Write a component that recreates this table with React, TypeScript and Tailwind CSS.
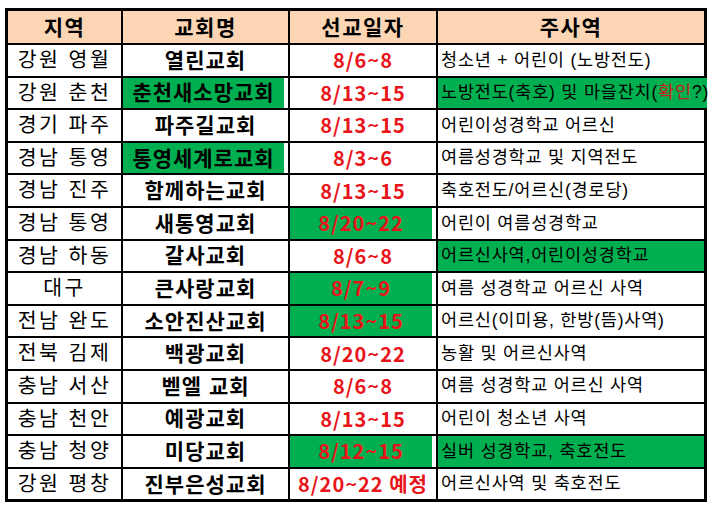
import React from 'react'

type Row = {
  region: string
  church: string
  date: string
  work: React.ReactNode
  churchGreen?: boolean
  dateGreen?: boolean
  workGreen?: boolean
  workOverflow?: boolean
}

const ROWS: Row[] = [
  { region: '강원 영월', church: '열린교회', date: '8/6~8', work: '청소년 + 어린이 (노방전도)' },
  {
    region: '강원 춘천',
    church: '춘천새소망교회',
    date: '8/13~15',
    work: (
      <>
        노방전도(축호) 및 마을잔치(<span className="text-[#c0221a]">확인</span>?)
      </>
    ),
    churchGreen: true,
    workGreen: true,
    workOverflow: true,
  },
  { region: '경기 파주', church: '파주길교회', date: '8/13~15', work: '어린이성경학교 어르신' },
  { region: '경남 통영', church: '통영세계로교회', date: '8/3~6', work: '여름성경학교 및 지역전도', churchGreen: true },
  { region: '경남 진주', church: '함께하는교회', date: '8/13~15', work: '축호전도/어르신(경로당)' },
  { region: '경남 통영', church: '새통영교회', date: '8/20~22', work: '어린이 여름성경학교', dateGreen: true },
  { region: '경남 하동', church: '갈사교회', date: '8/6~8', work: '어르신사역,어린이성경학교', workGreen: true },
  { region: '대구', church: '큰사랑교회', date: '8/7~9', work: '여름 성경학교 어르신 사역', dateGreen: true },
  { region: '전남 완도', church: '소안진산교회', date: '8/13~15', work: '어르신(이미용, 한방(뜸)사역)', dateGreen: true },
  { region: '전북 김제', church: '백광교회', date: '8/20~22', work: '농활 및 어르신사역' },
  { region: '충남 서산', church: '벧엘 교회', date: '8/6~8', work: '여름 성경학교 어르신 사역' },
  { region: '충남 천안', church: '예광교회', date: '8/13~15', work: '어린이 청소년 사역' },
  { region: '충남 청양', church: '미당교회', date: '8/12~15', work: '실버 성경학교, 축호전도', dateGreen: true, workGreen: true },
  { region: '강원 평창', church: '진부은성교회', date: '8/20~22 예정', work: '어르신사역 및 축호전도' },
]

// Latin glyphs (spaces, brackets) from Liberation Sans, hangul from Noto CJK
const MIXED = "font-['Liberation_Sans','Noto_Sans_CJK_KR',sans-serif]"
const CJK = "font-['Noto_Sans_CJK_KR',sans-serif]"

function HeaderCell({ children }: { children: React.ReactNode }) {
  return (
    <div className="flex items-center justify-center bg-[#fcd5b4] text-[21px] font-bold leading-none tracking-[1.5px] text-black">
      {children}
    </div>
  )
}

export default function App() {
  return (
    <div className={`min-h-[506px] bg-white pl-[5px] pt-[8px] ${MIXED}`}>
      <div className="grid w-[702px] grid-cols-[113px_165px_146px_266px] grid-rows-[32px] auto-rows-[30.6px] gap-[2px] border-[3px] border-black bg-black">
        <HeaderCell>지역</HeaderCell>
        <HeaderCell>교회명</HeaderCell>
        <HeaderCell>선교일자</HeaderCell>
        <HeaderCell>주사역</HeaderCell>
        {ROWS.map((r, i) => (
          <React.Fragment key={i}>
            <div className="flex items-center justify-center bg-white text-[20.5px] leading-none tracking-[2.5px] text-black">
              {r.region}
            </div>
            <div className="flex bg-white">
              <div
                className={`flex flex-1 items-center justify-center text-[21px] font-bold leading-none tracking-[1px] text-black ${
                  r.churchGreen ? 'mr-[4px] bg-[#00b050]' : ''
                }`}
              >
                {r.church}
              </div>
            </div>
            <div className="flex bg-white">
              <div
                className={`flex flex-1 items-center justify-center text-[20px] font-bold leading-none tracking-[1px] text-[#e8141a] ${CJK} ${
                  r.dateGreen ? 'mr-[4px] bg-[#00b050]' : ''
                }`}
              >
                {r.date}
              </div>
            </div>
            <div className={`relative flex ${r.workGreen ? 'bg-[#00b050]' : 'bg-white'} ${r.workOverflow ? 'z-10 -mr-[3px]' : ''}`}>
              <div className="flex flex-1 items-center whitespace-nowrap pl-[3px] text-[17.5px] leading-none tracking-[0.8px] text-black">
                {r.work}
              </div>
            </div>
          </React.Fragment>
        ))}
      </div>
    </div>
  )
}
